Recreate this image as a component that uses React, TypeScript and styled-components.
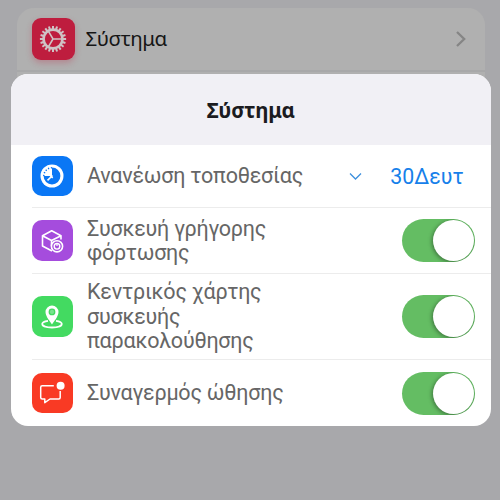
import React, { useState } from 'react';
import styled, { createGlobalStyle } from 'styled-components';

const GlobalStyle = createGlobalStyle`
  * { box-sizing: border-box; }
  body { margin: 0; background: #a8a8ab; }
`;

const Screen = styled.main`
  position: relative;
  width: 500px;
  height: 500px;
  padding: 8px 15px 0 17px;
  overflow: hidden;
  background: #a8a8ab;
  font-family: Roboto, "Noto Sans", sans-serif;
`;

const SettingsCard = styled.section`
  height: 120px;
  border-radius: 17px 17px 0 0;
  background: #b0b0b0;
`;

const SettingsItem = styled.div`
  display: flex;
  align-items: center;
  height: 64px;
  padding: 0 18px 0 15px;
  border-bottom: 2px solid #a8a8a9;
`;

const SettingsLabel = styled.span`
  flex: 1;
  margin-left: 11px;
  padding-bottom: 2px;
  font: 400 20.5px/28px "Noto Sans", sans-serif;
  letter-spacing: -0.45px;
  color: #161616;
`;

const IconTile = styled.div<{ $color: string; $glow?: boolean }>`
  display: flex;
  flex: none;
  align-items: center;
  justify-content: center;
  width: ${p => (p.$glow ? 42.5 : 40.5)}px;
  height: ${p => (p.$glow ? 42.5 : 40.5)}px;
  border-radius: ${p => (p.$glow ? 9 : 10)}px;
  background: ${p => p.$color};
  box-shadow: ${p => (p.$glow ? '0 3px 6px rgba(190, 30, 60, 0.28)' : 'none')};
  svg { display: block; }
`;

const Dialog = styled.section`
  position: absolute;
  top: 74px;
  left: 11px;
  width: 479.5px;
  height: 352px;
  border-radius: 17px;
  overflow: hidden;
  background: #fff;
`;

const DialogHeader = styled.header`
  display: flex;
  align-items: center;
  justify-content: center;
  height: 71px;
  background: #f1f0f5;
`;

const DialogTitle = styled.h1`
  margin: 0;
  font: 700 20.5px/28px "Noto Sans", sans-serif;
  letter-spacing: -0.25px;
  color: #1b1b20;
`;

const Row = styled.div<{ $height: number }>`
  display: flex;
  align-items: center;
  height: ${p => p.$height}px;
  margin-left: 21px;
  padding-right: 16px;
  border-bottom: 1px solid #ececec;
  &:last-child { border-bottom: 0; }
`;

const RowLabel = styled.span<{ $width?: number }>`
  width: ${p => p.$width ?? 240}px;
  margin-left: 14.5px;
  padding-top: 1px;
  font-size: 21.5px;
  line-height: 24.5px;
  letter-spacing: -0.23px;
  color: #666;
`;

const Interval = styled.button`
  display: flex;
  align-items: center;
  gap: 28px;
  margin-left: auto;
  margin-right: 11px;
  padding: 1px 0 0;
  border: 0;
  background: none;
  font: 400 21.3px/26px Roboto, sans-serif;
  color: #1680ea;
`;

const Track = styled.button<{ $on: boolean }>`
  display: flex;
  align-items: center;
  justify-content: ${p => (p.$on ? 'flex-end' : 'flex-start')};
  flex: none;
  width: 73px;
  height: 43px;
  margin-left: auto;
  padding: 1px;
  border: 0;
  border-radius: 22px;
  background: ${p => (p.$on ? '#64bd63' : '#ddd')};
  overflow: hidden;
`;

const Thumb = styled.span`
  width: 41px;
  height: 41px;
  border-radius: 50%;
  background: #fff;
  box-shadow: -1px 1px 4px rgba(0, 0, 0, 0.4);
`;

const Toggle = ({ label }: { label: string }) => {
  const [on, setOn] = useState(true);
  return (
    <Track $on={on} role="switch" aria-checked={on} aria-label={label} onClick={() => setOn(!on)}>
      <Thumb />
    </Track>
  );
};

const GearIcon = () => (
  <svg width="28" height="28" viewBox="-14 -14 28 28" fill="none" stroke="#cfc3c5">
    {Array.from({ length: 20 }, (_, i) => (
      <path key={i} d="M0 -9.8V-13.1" strokeWidth="2" transform={`rotate(${i * 18})`} />
    ))}
    <circle r="9.4" strokeWidth="2.6" />
    <path d="M9 0H0L-4.8 -8.2M0 0L-4.8 8.2" strokeWidth="1.6" />
  </svg>
);

const ClockIcon = () => (
  <svg width="24" height="24" viewBox="0 0 24 24" fill="none">
    <circle cx="12" cy="12" r="11.5" fill="#fff" />
    <path d="M12 12V3.6A8.4 8.4 0 1 1 3.6 12Z" fill="#0a77f5" />
    <path d="M3.8 12A8.2 8.2 0 0 1 12 3.8" stroke="#0a77f5" strokeWidth="1.5" strokeDasharray="1.2 1.7" />
    <path d="M12.5 11.5L7.5 16.3M10 11.2L12.7 14" stroke="#fff" strokeWidth="1.6" />
  </svg>
);

const BoxIcon = () => (
  <svg width="24" height="24" viewBox="0 0 24 24" fill="none" stroke="#fff" strokeWidth="1.6" strokeLinejoin="round">
    <path d="M12 22L2.5 17V6.8L11.7 1.8L21 6.8V10.5M2.5 6.8L11.5 11.5L21 6.8M11.5 11.5V17" />
    <circle cx="17" cy="17.3" r="5.6" fill="#a54cdd" />
    <circle cx="17" cy="17.3" r="2.8" strokeWidth="1.4" />
    <path d="M17 14.5V17" strokeWidth="1.2" />
  </svg>
);

const PinIcon = () => (
  <svg width="24" height="26" viewBox="0 0 24 26" fill="none">
    <path d="M8 16.8C4.3 17.3 2.2 18.5 2.2 20C2.2 22 6.5 23.5 12 23.5S21.8 22 21.8 20C21.8 18.5 19.7 17.3 16 16.8" stroke="#fff" strokeWidth="1.8" />
    <path fillRule="evenodd" d="M12 20.5C10.8 18.5 5.5 12.5 5.5 8A6.5 6.5 0 0 1 18.5 8C18.5 12.5 13.2 18.5 12 20.5ZM12 4.5A3.4 3.4 0 1 0 12 11.3A3.4 3.4 0 0 0 12 4.5Z" fill="#fff" />
    <circle cx="12" cy="7.9" r="2.1" fill="#fff" fillOpacity=".28" />
  </svg>
);

const MessageIcon = () => (
  <svg width="26" height="24" viewBox="0 0 26 24" fill="none">
    <path d="M14.8 4.8H3.2Q1.7 4.8 1.7 6.3V16.5Q1.7 18 3.2 18H5.8V21.7L11 18H19.7Q21.2 18 21.2 16.5V10" stroke="#fff" strokeWidth="1.5" strokeLinejoin="round" />
    <circle cx="21.6" cy="4.7" r="4" fill="#fff" />
  </svg>
);

export default function App() {
  return (
    <>
      <GlobalStyle />
      <Screen>
        <SettingsCard>
          <SettingsItem>
            <IconTile $color="#be1d3e" $glow><GearIcon /></IconTile>
            <SettingsLabel>Σύστημα</SettingsLabel>
            <svg width="12" height="18" viewBox="0 0 12 18" fill="none" stroke="#858585" strokeWidth="2.3">
              <path d="M2 2L9.2 9L2 16" />
            </svg>
          </SettingsItem>
        </SettingsCard>
        <Dialog role="dialog" aria-label="Σύστημα">
          <DialogHeader><DialogTitle>Σύστημα</DialogTitle></DialogHeader>
          <Row $height={63}>
            <IconTile $color="#0a77f5"><ClockIcon /></IconTile>
            <RowLabel>Ανανέωση τοποθεσίας</RowLabel>
            <Interval>
              <svg width="13" height="9" viewBox="0 0 13 9" fill="none" stroke="#3d8fdd" strokeWidth="1.3">
                <path d="M1 1.5L6.5 7L12 1.5" />
              </svg>
              <span>30Δευτ</span>
            </Interval>
          </Row>
          <Row $height={66}>
            <IconTile $color="#a54cdd"><BoxIcon /></IconTile>
            <RowLabel>Συσκευή γρήγορης φόρτωσης</RowLabel>
            <Toggle label="Συσκευή γρήγορης φόρτωσης" />
          </Row>
          <Row $height={86}>
            <IconTile $color="#43da61"><PinIcon /></IconTile>
            <RowLabel $width={210}>Κεντρικός χάρτης συσκευής παρακολούθησης</RowLabel>
            <Toggle label="Κεντρικός χάρτης συσκευής παρακολούθησης" />
          </Row>
          <Row $height={66}>
            <IconTile $color="#f93a24"><MessageIcon /></IconTile>
            <RowLabel>Συναγερμός ώθησης</RowLabel>
            <Toggle label="Συναγερμός ώθησης" />
          </Row>
        </Dialog>
      </Screen>
    </>
  );
}
